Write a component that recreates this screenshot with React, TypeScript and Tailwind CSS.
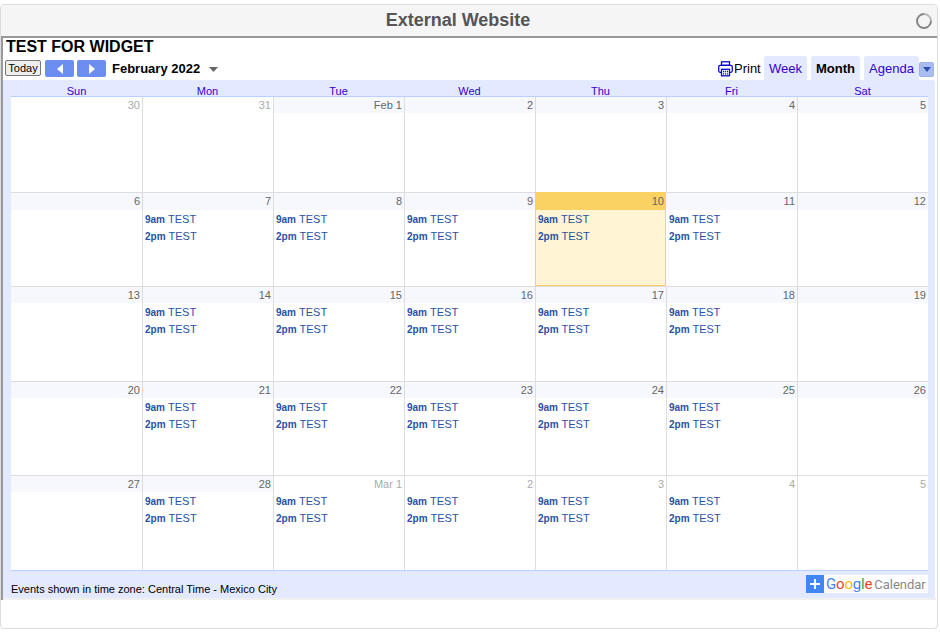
const font = { fontFamily: '"Liberation Sans", Arial, sans-serif' };

type Cell = { label: string; muted?: boolean; events?: boolean; today?: boolean };

const c = (label: string, events = false, muted = false, today = false): Cell => ({ label, events, muted, today });

const rows: { h: string; strip: string; cells: Cell[] }[] = [
  { h: "h-[95px]", strip: "h-[16px]", cells: [c("30", false, true), c("31", false, true), c("Feb 1"), c("2"), c("3"), c("4"), c("5")] },
  { h: "h-[94px]", strip: "h-[17px]", cells: [c("6"), c("7", true), c("8", true), c("9", true), c("10", true, false, true), c("11", true), c("12")] },
  { h: "h-[95px]", strip: "h-[16px]", cells: [c("13"), c("14", true), c("15", true), c("16", true), c("17", true), c("18", true), c("19")] },
  { h: "h-[94px]", strip: "h-[16px]", cells: [c("20"), c("21", true), c("22", true), c("23", true), c("24", true), c("25", true), c("26")] },
  { h: "h-[95px]", strip: "h-[16px]", cells: [c("27"), c("28", true), c("Mar 1", true, true), c("2", true, true), c("3", true, true), c("4", true, true), c("5", false, true)] },
];

const days = ["Sun", "Mon", "Tue", "Wed", "Thu", "Fri", "Sat"];

function Event({ time }: { time: string }) {
  return (
    <div className="h-[17px] pl-[2px] text-[11px] leading-[17px] text-[#2952a3] whitespace-nowrap">
      <span className="font-bold text-[10px] mr-[3px]">{time}</span>TEST
    </div>
  );
}

function DayCell({
  cell,
  first,
  firstRow,
  afterToday,
  strip,
}: {
  cell: Cell;
  first: boolean;
  firstRow: boolean;
  afterToday: boolean;
  strip: string;
}) {
  const stripBg = cell.today ? "bg-[#fad163]" : cell.muted ? "bg-white" : "bg-[#f6f8fe]";
  const borders = cell.today
    ? "bg-[#fff4d4] border border-[#fad163] border-b-[#fad163]"
    : `border-[#dddddd] ${first || afterToday ? "" : "border-l"} ${firstRow ? "" : "border-t"}`;
  return (
    <div className={`w-[131px] shrink-0 ${borders}`}>
      <div
        className={`${strip} ${cell.today ? "pr-[1px]" : "pr-[2px]"} text-right text-[11px] leading-[16px] ${stripBg} ${
          cell.muted ? "text-[#aaaaaa]" : "text-[#666666]"
        }`}
      >
        {cell.label}
      </div>
      {cell.events && (
        <div className={`pt-[1px] ${afterToday ? "pl-[1px]" : ""}`}>
          <Event time="9am" />
          <Event time="2pm" />
        </div>
      )}
    </div>
  );
}

function Triangle({ dir }: { dir: "l" | "r" }) {
  return (
    <svg width="6" height="10" viewBox="0 0 6 10" className="block">
      <path d={dir === "l" ? "M6 0V10L0 5Z" : "M0 0V10L6 5Z"} fill="#fff" />
    </svg>
  );
}

function Tab({ label, active, w }: { label: string; active?: boolean; w: string }) {
  return (
    <div
      className={`h-[24px] ${w} rounded-t-[3px] bg-[#e3e9ff] text-center text-[13px] leading-[26px] ${
        active ? "font-bold text-black" : "text-[#3300cc]"
      }`}
    >
      {label}
    </div>
  );
}

export default function App() {
  return (
    <div className="w-[940px] h-[632px] bg-white relative overflow-hidden" style={font}>
      <div className="absolute left-0 top-[4px] w-[938px] h-[625px] rounded-[4px] border border-[#dcdcdc] bg-white overflow-hidden flex flex-col">
        <div className="h-[31px] shrink-0 bg-[#f5f5f5] flex items-center justify-center relative pr-[22px] pb-[2px]">
          <span className="text-[18px] font-bold text-[#555555] leading-[28px]">External Website</span>
          <span className="absolute right-[5px] top-[8px] w-[16px] h-[16px] rounded-full border-2 border-[#868686] border-t-[#b8b8b8] rotate-45" />
        </div>
        <div className="h-[564px] shrink-0 border-t-2 border-l-2 border-[#999999]">
          <div className="h-[562px] w-[933px] flex flex-col bg-white">
            <div className="h-[18px] pl-[3px] text-[16px] font-bold leading-[18px] text-black">TEST FOR WIDGET</div>
            <div className="h-[24px] flex items-start relative">
              <div className="ml-[2px] mt-[4px] w-[36px] h-[16px] rounded-[2px] border border-[#777777] bg-[#eeeeee] text-center text-[11px] leading-[14px] text-black">
                Today
              </div>
              <div className="ml-[4px] mt-[4px] w-[29px] h-[17px] rounded-[2px] bg-[#6c8ef0] flex items-center justify-center">
                <Triangle dir="l" />
              </div>
              <div className="ml-[3px] mt-[4px] w-[29px] h-[17px] rounded-[2px] bg-[#6c8ef0] flex items-center justify-center">
                <Triangle dir="r" />
              </div>
              <div className="ml-[6px] mt-[4px] text-[13px] font-bold leading-[17px] text-black whitespace-nowrap">February 2022</div>
              <svg width="9" height="5" viewBox="0 0 9 5" className="ml-[9px] mt-[11px]">
                <path d="M0 0H9L4.500 5Z" fill="#666666" />
              </svg>
              <div className="ml-auto mr-[2px] flex items-start">
                <svg width="15" height="16" viewBox="0 0 15 16" className="mt-[5px]" fill="none" stroke="#0a0acc" strokeWidth="1.300">
                  <rect x="3.500" y="0.800" width="8" height="3.500" />
                  <rect x="0.700" y="4.300" width="13.600" height="7" rx="1.500" />
                  <rect x="3.500" y="8.300" width="8" height="6.500" fill="#fff" />
                  <path d="M5 10.500H10M5 12.800H10" strokeDasharray="1.200 0.800" />
                </svg>
                <span className="ml-[1px] mt-[4px] w-[27px] text-[13px] leading-[18px] text-black">Print</span>
                <div className="ml-[3px]">
                  <Tab label="Week" w="w-[43px]" />
                </div>
                <div className="ml-[4px]">
                  <Tab label="Month" active w="w-[49px]" />
                </div>
                <div className="ml-[4px]">
                  <Tab label="Agenda" w="w-[55px]" />
                </div>
                <div className="mt-[6px] w-[15px] h-[15px] rounded-[2px] border border-[#9db2e8] bg-[#a9bdf0] flex items-center justify-center">
                  <svg width="8" height="5" viewBox="0 0 8 5">
                    <path d="M0 0H8L4 5Z" fill="#2a50b0" />
                  </svg>
                </div>
              </div>
            </div>
            <div className="h-[518px] w-[932px] bg-[#e3e9ff] rounded-tr-[3px] pl-[8px] flex flex-col">
              <div className="flex h-[16px] shrink-0">
                {days.map((d) => (
                  <div key={d} className="w-[131px] text-center text-[11px] leading-[22px] text-[#3300cc]">
                    {d}
                  </div>
                ))}
              </div>
              <div className="w-[917px] bg-white border-t border-b border-[#bcd0ff]">
                {rows.map((r, i) => (
                  <div key={i} className={`flex ${r.h}`}>
                    {r.cells.map((cell, j) => (
                      <DayCell
                        key={j}
                        cell={cell}
                        first={j === 0}
                        firstRow={i === 0}
                        afterToday={j > 0 && !!r.cells[j - 1].today}
                        strip={r.strip}
                      />
                    ))}
                  </div>
                ))}
              </div>
              <div className="w-[917px] flex items-start justify-between">
                <div className="mt-[11px] text-[11px] leading-[14px] text-black whitespace-nowrap">
                  Events shown in time zone: Central Time - Mexico City
                </div>
                <div className="mt-[4px] h-[18px] flex bg-white">
                  <div className="w-[18px] h-[18px] bg-[#4285f4] flex items-center justify-center">
                    <svg width="10" height="10" viewBox="0 0 10 10">
                      <path d="M4 0H6V4H10V6H6V10H4V6H0V4H4Z" fill="#fff" />
                    </svg>
                  </div>
                  <div className="w-[104px] pl-[2px] leading-[18px] whitespace-nowrap" style={{ fontFamily: 'Roboto, "Liberation Sans", sans-serif' }}>
                    <span className="text-[15px] tracking-[-0.2px]">
                      <span className="text-[#4285f4]">G</span>
                      <span className="text-[#ea4335]">o</span>
                      <span className="text-[#fbbc05]">o</span>
                      <span className="text-[#4285f4]">g</span>
                      <span className="text-[#34a853]">l</span>
                      <span className="text-[#ea4335]">e</span>
                    </span>
                    <span className="ml-[2px] text-[13px] text-[#888888]">Calendar</span>
                  </div>
                </div>
              </div>
            </div>
            <div className="h-[2px] w-[933px] bg-[#f0f0f0]" />
          </div>
        </div>
      </div>
    </div>
  );
}
